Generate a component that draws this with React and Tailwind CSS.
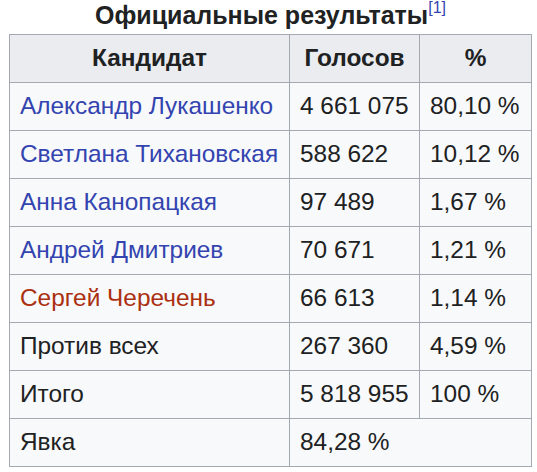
const rows = [
  { name: "Александр Лукашенко", kind: "link", votes: "4 661 075", pct: "80,10 %" },
  { name: "Светлана Тихановская", kind: "link", votes: "588 622", pct: "10,12 %" },
  { name: "Анна Канопацкая", kind: "link", votes: "97 489", pct: "1,67 %" },
  { name: "Андрей Дмитриев", kind: "link", votes: "70 671", pct: "1,21 %" },
  { name: "Сергей Черечень", kind: "new", votes: "66 613", pct: "1,14 %" },
  { name: "Против всех", votes: "267 360", pct: "4,59 %" },
  { name: "Итого", votes: "5 818 955", pct: "100 %" },
];

function NameCell({ name, kind }) {
  if (kind === "link") return <a className="text-[#3344b0]">{name}</a>;
  if (kind === "new") return <a className="text-[#ab3010]">{name}</a>;
  return <span>{name}</span>;
}

export default function App() {
  return (
    <div className="w-[537px] h-[472px] bg-white text-[#202122] font-['Liberation_Sans',Arial,sans-serif] overflow-hidden">
      <table className="ml-[9px] w-[522px] table-fixed border-collapse text-[24.4px]">
        <caption className="h-[34px] pb-[3px] text-[25px] font-bold leading-[31px] text-center">
          Официальные результаты
          <sup className="text-[16px] font-normal text-[#3344b0] relative -top-[2px] align-super leading-none">[1]</sup>
        </caption>
        <colgroup>
          <col className="w-[280px]" />
          <col className="w-[130px]" />
          <col className="w-[112px]" />
        </colgroup>
        <thead>
          <tr className="h-[48px] bg-[#eaecf0]">
            <th className="border border-[#a2a9b1] px-[10px] font-bold">Кандидат</th>
            <th className="border border-[#a2a9b1] px-[10px] font-bold">Голосов</th>
            <th className="border border-[#a2a9b1] px-[10px] font-bold">%</th>
          </tr>
        </thead>
        <tbody>
          {rows.map((r) => (
            <tr key={r.name} className="h-[48px] bg-[#f8f9fa]">
              <td className="border border-[#a2a9b1] px-[10px] whitespace-nowrap">
                <NameCell name={r.name} kind={r.kind} />
              </td>
              <td className="border border-[#a2a9b1] px-[10px] whitespace-nowrap">{r.votes}</td>
              <td className="border border-[#a2a9b1] px-[10px] whitespace-nowrap">{r.pct}</td>
            </tr>
          ))}
          <tr className="h-[48px] bg-[#f8f9fa]">
            <td className="border border-[#a2a9b1] px-[10px]">Явка</td>
            <td colSpan={2} className="border border-[#a2a9b1] px-[10px]">84,28 %</td>
          </tr>
        </tbody>
      </table>
    </div>
  );
}
